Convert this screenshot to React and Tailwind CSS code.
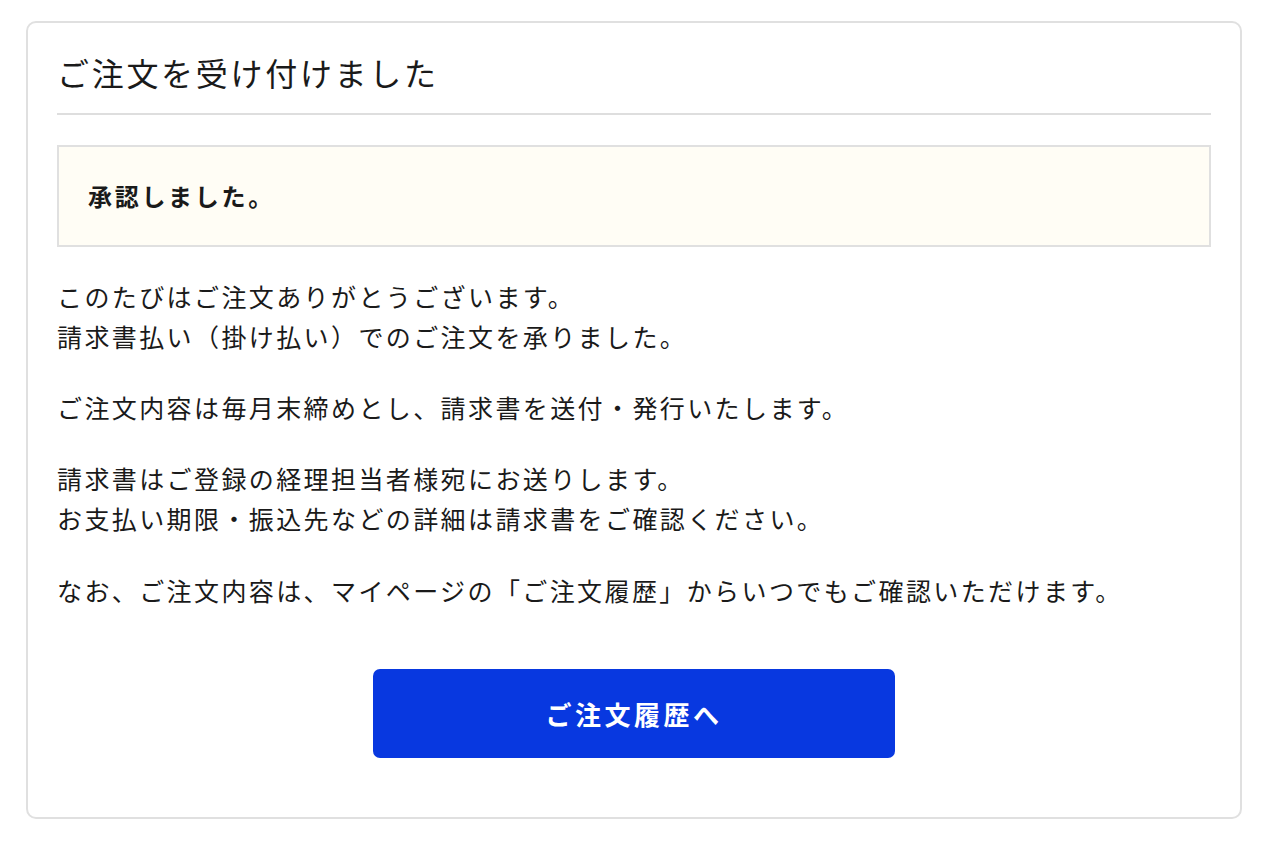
export default function App() {
  const font = { fontFamily: '"Noto Sans CJK JP", "Noto Sans", sans-serif' };
  return (
    <div className="w-[1280px] h-[844px] bg-white pt-[21px] pl-[26px]" style={font}>
      <div className="w-[1216px] h-[798px] border-2 border-[#e0e0e0] rounded-[10px] px-[29px] pt-[29px] text-[#1a1a1a]">
        <h1 className="text-[32px] leading-[40px] tracking-[2.7px] pb-[21px] border-b-2 border-[#dedede]">
          ご注文を受け付けました
        </h1>
        <div className="mt-[30px] h-[102px] border-2 border-[#e0e0e0] bg-[#fffdf5] flex items-center px-[29px]">
          <p className="text-[24px] font-bold tracking-[2.7px]">承認しました。</p>
        </div>
        <div className="mt-[29px] text-[25px] leading-[40px] tracking-[2.4px] flex flex-col gap-[31px]">
          <p>
            このたびはご注文ありがとうございます。
            <br />
            請求書払い（掛け払い）でのご注文を承りました。
          </p>
          <p>ご注文内容は毎月末締めとし、請求書を送付・発行いたします。</p>
          <p>
            請求書はご登録の経理担当者様宛にお送りします。
            <br />
            お支払い期限・振込先などの詳細は請求書をご確認ください。
          </p>
          <p className="mt-[1px]">なお、ご注文内容は、マイページの「ご注文履歴」からいつでもご確認いただけます。</p>
        </div>
        <div className="mt-[59px] flex justify-center">
          <button className="w-[522px] h-[89px] rounded-[7px] bg-[#0838e0] text-white text-[26px] font-bold tracking-[3.5px]">
            ご注文履歴へ
          </button>
        </div>
      </div>
    </div>
  );
}
